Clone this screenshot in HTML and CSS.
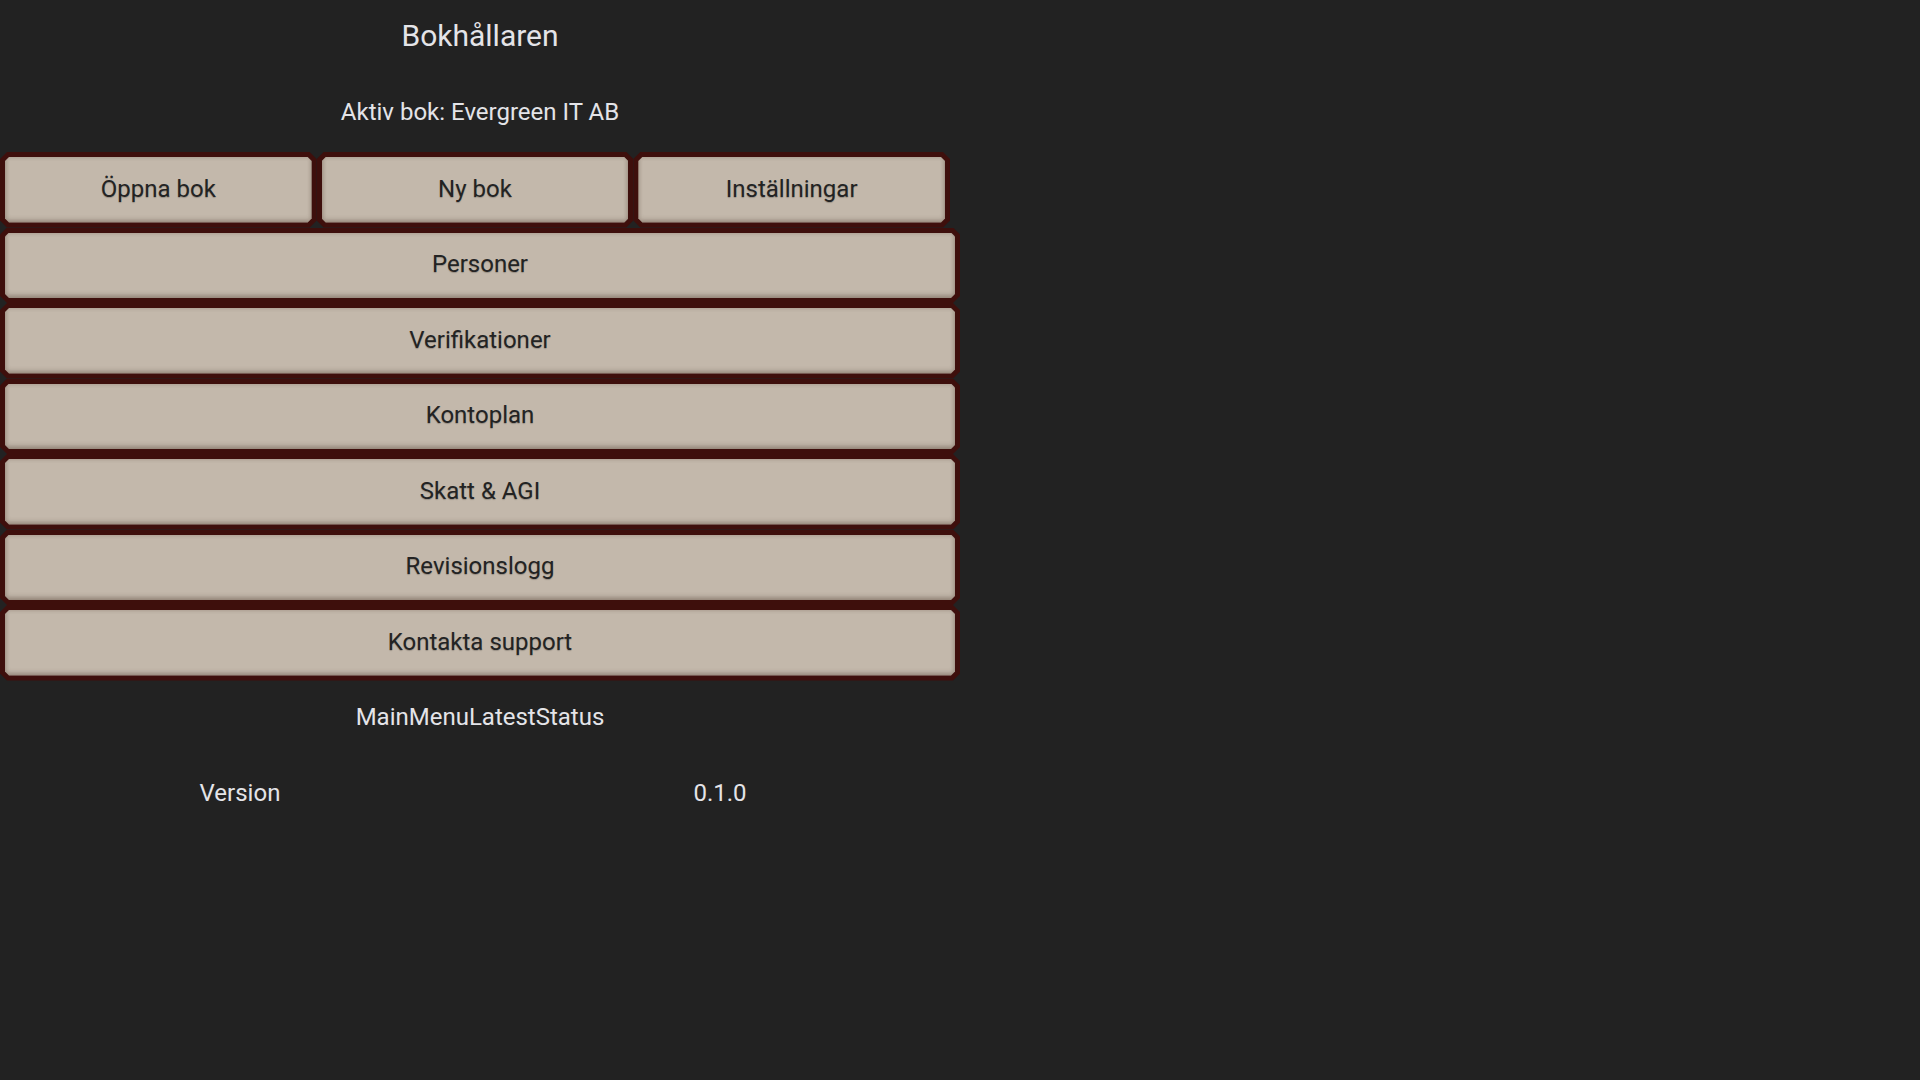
FILE: index.html
```html
<!DOCTYPE html>
<html lang="sv">
<head>
<meta charset="utf-8">
<title>Bokhållaren</title>
<link rel="stylesheet" href="styles.css">
</head>
<body>
<main class="menu">
  <div class="title">Bokhållaren</div>
  <div class="active-book">Aktiv bok: Evergreen IT AB</div>
  <div class="top-row">
    <button class="btn"><span class="face">Öppna bok</span></button>
    <button class="btn"><span class="face">Ny bok</span></button>
    <button class="btn"><span class="face">Inställningar</span></button>
  </div>
  <button class="btn"><span class="face">Personer</span></button>
  <button class="btn"><span class="face">Verifikationer</span></button>
  <button class="btn"><span class="face">Kontoplan</span></button>
  <button class="btn"><span class="face">Skatt &amp; AGI</span></button>
  <button class="btn"><span class="face">Revisionslogg</span></button>
  <button class="btn"><span class="face">Kontakta support</span></button>
  <div class="status">MainMenuLatestStatus</div>
  <div class="version-row">
    <span>Version</span>
    <span>0.1.0</span>
  </div>
</main>
</body>
</html>
```
FILE: styles.css
```css
html, body {
  margin: 0;
  padding: 0;
  background: #222222;
  height: 100%;
}

body {
  font-family: Roboto, "Liberation Sans", sans-serif;
  color: #e4e4e8;
}

.menu {
  width: 960px;
  display: flex;
  flex-direction: column;
}

.title {
  height: 71px;
  line-height: 71px;
  text-align: center;
  font-size: 30px;
}

.active-book {
  height: 79px;
  padding-top: 2px;
  line-height: 79px;
  text-align: center;
  font-size: 24px;
}

.top-row {
  width: 950px;
  display: grid;
  grid-template-columns: 1fr 1fr 1fr;
}

.btn {
  display: block;
  width: 100%;
  height: 75.5px;
  margin: 0;
  padding: 5px;
  border: none;
  background: #3e0f0c;
  font-family: Roboto, "Liberation Sans", sans-serif;
  font-size: 24px;
  color: #232323;
  cursor: pointer;
  clip-path: polygon(7px 0, calc(100% - 7px) 0, 100% 7px, 100% calc(100% - 7px), calc(100% - 7px) 100%, 7px 100%, 0 calc(100% - 7px), 0 7px);
}

.face {
  display: flex;
  align-items: center;
  justify-content: center;
  box-sizing: border-box;
  width: 100%;
  height: 100%;
  padding-bottom: 2px;
  background: #c3b8ab;
  text-shadow: 0 1px 1px rgba(0, 0, 0, 0.22);
  box-shadow: inset 0 -3px 5px rgba(60, 40, 30, 0.28), inset 0 0 4px rgba(60, 40, 30, 0.22);
  clip-path: polygon(4px 0, calc(100% - 4px) 0, 100% 4px, 100% calc(100% - 4px), calc(100% - 4px) 100%, 4px 100%, 0 calc(100% - 4px), 0 4px);
}

.status {
  height: 69px;
  padding-top: 2px;
  line-height: 69px;
  text-align: center;
  font-size: 24px;
}

.version-row {
  height: 79px;
  padding-top: 2px;
  display: grid;
  grid-template-columns: 1fr 1fr;
  align-items: center;
  text-align: center;
  font-size: 24px;
}
```
